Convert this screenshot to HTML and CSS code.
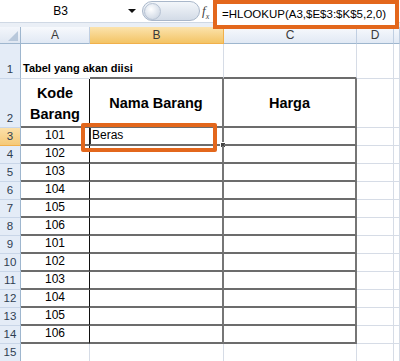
FILE: index.html
```html
<!DOCTYPE html>
<html lang="id">
<head>
    <meta charset="UTF-8">
    <title>HLOOKUP - Tabel yang akan diisi</title>
    <link rel="stylesheet" href="styles.css">
</head>
<body>
    <div class="formula-bar">
        <div class="name-box">
            <span class="cell-ref">B3</span>
            <span class="drop"></span>
        </div>
        <div class="pill"><span class="knob"></span></div>
        <span class="fx">f<sub>x</sub></span>
        <div class="formula">=HLOOKUP(A3,$E$3:$K$5,2,0)</div>
    </div>

    <div class="sheet">
        <!-- column headers -->
        <div class="corner"><span class="tri"></span></div>
        <div class="col-head">A</div>
        <div class="col-head active">B</div>
        <div class="col-head">C</div>
        <div class="col-head">D</div>
        <div class="col-head"></div>

        <!-- row 1 -->
        <div class="rh">1</div>
        <div class="c title">Tabel yang akan diisi</div>
        <div class="c top"></div>
        <div class="c top"></div>
        <div class="c"></div>
        <div class="c"></div>

        <!-- row 2 -->
        <div class="rh">2</div>
        <div class="c t col-a head">Kode<br>Barang</div>
        <div class="c t col-b head">Nama Barang</div>
        <div class="c t col-c head">Harga</div>
        <div class="c"></div>
        <div class="c"></div>

        <!-- row 3 -->
        <div class="rh active">3</div>
        <div class="c t col-a num">101</div>
        <div class="c t col-b selected">Beras<span class="handle"></span></div>
        <div class="c t col-c"></div>
        <div class="c"></div>
        <div class="c"></div>

        <div class="rh">4</div>
        <div class="c t col-a num">102</div>
        <div class="c t col-b"></div>
        <div class="c t col-c"></div>
        <div class="c"></div>
        <div class="c"></div>

        <div class="rh">5</div>
        <div class="c t col-a num">103</div>
        <div class="c t col-b"></div>
        <div class="c t col-c"></div>
        <div class="c"></div>
        <div class="c"></div>

        <div class="rh">6</div>
        <div class="c t col-a num">104</div>
        <div class="c t col-b"></div>
        <div class="c t col-c"></div>
        <div class="c"></div>
        <div class="c"></div>

        <div class="rh">7</div>
        <div class="c t col-a num">105</div>
        <div class="c t col-b"></div>
        <div class="c t col-c"></div>
        <div class="c"></div>
        <div class="c"></div>

        <div class="rh">8</div>
        <div class="c t col-a num">106</div>
        <div class="c t col-b"></div>
        <div class="c t col-c"></div>
        <div class="c"></div>
        <div class="c"></div>

        <div class="rh">9</div>
        <div class="c t col-a num">101</div>
        <div class="c t col-b"></div>
        <div class="c t col-c"></div>
        <div class="c"></div>
        <div class="c"></div>

        <div class="rh">10</div>
        <div class="c t col-a num">102</div>
        <div class="c t col-b"></div>
        <div class="c t col-c"></div>
        <div class="c"></div>
        <div class="c"></div>

        <div class="rh">11</div>
        <div class="c t col-a num">103</div>
        <div class="c t col-b"></div>
        <div class="c t col-c"></div>
        <div class="c"></div>
        <div class="c"></div>

        <div class="rh">12</div>
        <div class="c t col-a num">104</div>
        <div class="c t col-b"></div>
        <div class="c t col-c"></div>
        <div class="c"></div>
        <div class="c"></div>

        <div class="rh">13</div>
        <div class="c t col-a num">105</div>
        <div class="c t col-b"></div>
        <div class="c t col-c"></div>
        <div class="c"></div>
        <div class="c"></div>

        <div class="rh">14</div>
        <div class="c t col-a num">106</div>
        <div class="c t col-b"></div>
        <div class="c t col-c"></div>
        <div class="c"></div>
        <div class="c"></div>

        <div class="rh">15</div>
        <div class="c"></div>
        <div class="c"></div>
        <div class="c"></div>
        <div class="c"></div>
        <div class="c"></div>

        <!-- orange annotation round B3 -->
        <div class="callout"></div>
    </div>
</body>
</html>
```

FILE: styles.css
```css
body {
    margin: 0;
    width: 400px;
    height: 361px;
    overflow: hidden;
    background: #fff;
    font-family: "Liberation Sans", Arial, sans-serif;
    color: #000;
}

/* formula bar */
.formula-bar {
    display: flex;
    align-items: flex-start;
    height: 27px;
    background: linear-gradient(#fff 0, #fff 22px, #cfd8e4 22px, #cfd8e4 23px, #eaeff6 23px);
}
.name-box {
    display: flex;
    align-items: center;
    width: 140px;
    height: 22px;
    background: #fff;
}
.cell-ref {
    width: 121px;
    text-align: center;
    font-size: 12px;
}
.drop {
    margin-left: 7px;
    border-left: 4px solid transparent;
    border-right: 4px solid transparent;
    border-top: 4px solid #111;
}
.pill {
    display: flex;
    align-items: center;
    box-sizing: border-box;
    width: 58px;
    height: 20px;
    margin: 1px 0 0 2px;
    padding-left: 1px;
    border: 1px solid #a9b7ca;
    border-radius: 10px;
    background: linear-gradient(#f3f6fa, #d3dbe7);
}
.knob {
    width: 15px;
    height: 15px;
    border-radius: 50%;
    border: 1px solid #b6c2d3;
    background: radial-gradient(circle at 40% 35%, #fff 0, #e6ebf2 40%, #c4cedc 100%);
}
.fx {
    width: 11px;
    margin: 3px 0 0 2px;
    font: italic 13px "Liberation Serif", serif;
    color: #444;
}
.fx sub {
    font-size: 8px;
}
.formula {
    position: relative;
    z-index: 2;
    box-sizing: border-box;
    width: 186px;
    height: 29px;
    padding-left: 5px;
    border: 4px solid #e3671c;
    background: #fff;
    font-size: 11.5px;
    line-height: 20px;
    white-space: nowrap;
}

/* grid */
.sheet {
    position: relative;
    display: grid;
    grid-template-columns: 21px 69px 134px 133px 37px 6px;
    grid-template-rows: 17px 35px 49px repeat(13, 18px);
}
.corner {
    display: flex;
    align-items: flex-end;
    justify-content: flex-end;
    box-sizing: border-box;
    padding: 0 2px 2px 0;
    border-right: 1px solid #9eb6ce;
    border-bottom: 1px solid #9eb6ce;
    background: linear-gradient(#f3f6fb, #dfe7f2);
}
.tri {
    width: 10px;
    height: 10px;
    background: #b8c8db;
    clip-path: polygon(100% 0, 100% 100%, 0 100%);
}
.col-head {
    display: flex;
    align-items: center;
    justify-content: center;
    border-right: 1px solid #c0cfe2;
    border-bottom: 1px solid #9eb6ce;
    background: linear-gradient(#f7f9fc, #e1e9f4);
    font-size: 12px;
    color: #3a3a3a;
}
.col-head.active {
    border-color: #f1b04b;
    background: linear-gradient(#fbe3ad, #f3c465);
}
.rh {
    display: flex;
    align-items: flex-end;
    justify-content: center;
    box-sizing: border-box;
    padding-bottom: 2px;
    border-right: 1px solid #9eb6ce;
    border-bottom: 1px solid #c9d6e8;
    background: #e4ecf7;
    font-size: 11.5px;
    line-height: 13px;
    color: #2f3e52;
}
.rh.active {
    background: linear-gradient(#fbe0a9, #f5c978);
    border-bottom-color: #f1b04b;
}

/* cells */
.c {
    position: relative;
    display: flex;
    align-items: flex-end;
    box-sizing: border-box;
    min-width: 0;
    padding: 0 2px 2px;
    border-right: 1px solid #d6dce6;
    border-bottom: 1px solid #d6dce6;
    font-size: 12px;
    line-height: 13px;
    white-space: nowrap;
}
.title {
    border-right-color: transparent;
    font-size: 11px;
    font-weight: bold;
    padding-bottom: 3px;
}
.top,
.t {
    border-bottom: 2px solid #6c6c6c;
}
.col-a {
    border-right: 1px solid #111;
}
.col-b,
.col-c {
    border-right: 2px solid #767676;
}
.head {
    align-items: center;
    justify-content: center;
    padding: 2px 0 0;
    text-align: center;
    font-size: 14.5px;
    font-weight: bold;
    line-height: 21px;
    white-space: normal;
}
.num {
    justify-content: center;
}
.selected {
    box-shadow: inset 1px 0 0 #333;
}
.handle {
    position: absolute;
    right: -4px;
    bottom: -4px;
    width: 4px;
    height: 4px;
    border: 1px solid #fff;
    background: #444;
}

.callout {
    position: absolute;
    left: 81px;
    top: 96px;
    box-sizing: border-box;
    width: 136px;
    height: 29px;
    border: 4px solid #e3671c;
    border-radius: 2px;
    pointer-events: none;
}
```
